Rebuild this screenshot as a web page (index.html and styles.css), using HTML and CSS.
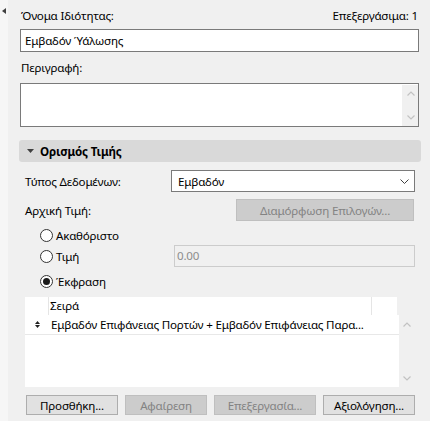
FILE: index.html
```html
<!DOCTYPE html>
<html lang="el">
<head>
<meta charset="utf-8">
<link rel="stylesheet" href="styles.css">
</head>
<body>
<div class="app">
  <div class="strip">
    <svg class="collapse" width="4" height="6" viewBox="0 0 4 6"><polygon points="4,0 4,6 0,3" fill="#404040"/></svg>
  </div>
  <div class="main">
    <div class="head">
      <span>Όνομα Ιδιότητας:</span>
      <span class="count">Επεξεργάσιμα: 1</span>
    </div>
    <div class="field">Εμβαδόν Ύάλωσης</div>
    <div class="label2">Περιγραφή:</div>
    <div class="textarea">
      <div class="vscroll">
        <svg width="8" height="5" viewBox="0 0 8 5"><polyline points="0.5,4.5 4,1 7.5,4.5" fill="none" stroke="#c2c2c2" stroke-width="1.2"/></svg>
        <svg width="8" height="5" viewBox="0 0 8 5"><polyline points="0.5,0.5 4,4 7.5,0.5" fill="none" stroke="#c2c2c2" stroke-width="1.2"/></svg>
      </div>
    </div>

    <div class="section">
      <svg class="tri" width="7" height="4" viewBox="0 0 7 4"><polygon points="0,0 7,0 3.5,4" fill="#404040"/></svg>
      <span>Ορισμός Τιμής</span>
    </div>

    <div class="body">
      <div class="frow first">
        <div class="lbl">Τύπος Δεδομένων:</div>
        <div class="select">
          <span>Εμβαδόν</span>
          <svg width="9" height="5" viewBox="0 0 9 5"><polyline points="0.5,0.5 4.5,4.5 8.5,0.5" fill="none" stroke="#404040" stroke-width="1"/></svg>
        </div>
      </div>
      <div class="frow second">
        <div class="lbl">Αρχική Τιμή:</div>
        <div class="btn disabled wide">Διαμόρφωση Επιλογών...</div>
      </div>

      <div class="radio r1">
        <span class="circle"></span><span>Ακαθόριστο</span>
      </div>
      <div class="radio r2">
        <div class="rlbl"><span class="circle"></span><span>Τιμή</span></div>
        <div class="dinput">0.00</div>
      </div>
      <div class="radio r3">
        <span class="circle checked"></span><span>Έκφραση</span>
      </div>

      <div class="list">
        <div class="lhead">
          <div class="c1"></div>
          <div class="c2">Σειρά</div>
          <div class="c3"></div>
        </div>
        <div class="lbody">
          <div class="rows">
            <div class="lrow">
              <div class="c1">
                <svg width="5" height="7" viewBox="0 0 5 7"><polygon points="0,3 5,3 2.5,0" fill="#202020"/><polygon points="0,4 5,4 2.5,7" fill="#202020"/></svg>
              </div>
              <div class="txt">Εμβαδόν Επιφάνειας Πορτών + Εμβαδόν Επιφάνειας Παρα...</div>
            </div>
          </div>
          <div class="lscroll">
            <svg width="8" height="5" viewBox="0 0 8 5"><polyline points="0.5,4.5 4,1 7.5,4.5" fill="none" stroke="#c2c2c2" stroke-width="1.2"/></svg>
            <svg width="8" height="5" viewBox="0 0 8 5"><polyline points="0.5,0.5 4,4 7.5,0.5" fill="none" stroke="#c2c2c2" stroke-width="1.2"/></svg>
          </div>
        </div>
      </div>

      <div class="buttons">
        <div class="btn b1">Προσθήκη...</div>
        <div class="btn disabled b2">Αφαίρεση</div>
        <div class="btn disabled b3">Επεξεργασία...</div>
        <div class="btn b4">Αξιολόγηση...</div>
      </div>
    </div>
  </div>
</div>
</body>
</html>
```

FILE: styles.css
```css
* { box-sizing: border-box; }

html, body {
  margin: 0;
  background: #f0f0f0;
}

body {
  width: 430px;
  height: 421px;
  overflow: hidden;
  font-family: "Noto Sans", "Open Sans", sans-serif;
  font-size: 11.6px;
  letter-spacing: -0.2px;
  color: #000;
}

.app {
  display: flex;
  height: 421px;
}

.strip {
  width: 8px;
  background: #f6f6f6;
  padding-top: 8px;
  padding-left: 2px;
}

.collapse { display: block; }

.main {
  flex: 1;
  padding: 8px 11px 0 12px;
}

.head {
  display: flex;
  justify-content: space-between;
  height: 16px;
  line-height: 16px;
  padding-left: 1px;
}

.count { padding-right: 1px; }

.field {
  margin-top: 5px;
  height: 23px;
  border: 1px solid #7a7a7a;
  background: #fff;
  padding-left: 4px;
  line-height: 21px;
  white-space: nowrap;
}

.label2 {
  margin-top: 8px;
  height: 16px;
  line-height: 16px;
  padding-left: 1px;
}

.textarea {
  margin-top: 7px;
  height: 44px;
  border: 1px solid #7a7a7a;
  background: #fff;
  display: flex;
  justify-content: flex-end;
  padding: 1px 0 0 0;
}

.vscroll, .lscroll {
  width: 16px;
  background: #f0f0f0;
  display: flex;
  flex-direction: column;
  justify-content: space-between;
  align-items: center;
}

.vscroll { padding: 6px 0 6px 1px; }

.vscroll svg, .lscroll svg { display: block; }

.section {
  margin: 13px -2px 0 -1px;
  height: 22px;
  background: #d9d9d9;
  border-radius: 3px;
  display: flex;
  align-items: center;
  padding-left: 8px;
  font-weight: bold;
}

.section .tri { margin-right: 6px; }

.body {
  padding: 0 4px 0 5px;
}

.frow {
  display: flex;
  align-items: center;
  height: 22px;
}

.frow.first { margin-top: 8px; }
.frow.second { margin-top: 7px; }

.lbl { width: 146px; }

.select {
  flex: 1;
  height: 22px;
  border: 1px solid #7a7a7a;
  background: #fff;
  display: flex;
  align-items: center;
  justify-content: space-between;
  padding: 0 5px 0 6px;
}

.btn {
  height: 22px;
  border: 1px solid #adadad;
  background: #e1e1e1;
  display: flex;
  align-items: center;
  justify-content: center;
  white-space: nowrap;
}

.btn.disabled {
  border-color: #bfbfbf;
  background: #cccccc;
  color: #838383;
}

.btn.wide {
  margin-left: auto;
  margin-right: 1px;
  width: 178px;
}

.radio {
  display: flex;
  align-items: center;
  padding-left: 15px;
  gap: 3px;
}

.radio.r1 { margin-top: 5px; height: 18px; }
.radio.r2 { margin-top: 1px; height: 22px; padding-left: 0; }
.radio.r3 { margin-top: 5px; height: 18px; }

.rlbl {
  width: 146px;
  padding-left: 15px;
  display: flex;
  align-items: center;
  gap: 3px;
}

.circle {
  width: 13px;
  height: 13px;
  border: 1px solid #333;
  border-radius: 50%;
  background: #fff;
  display: flex;
  align-items: center;
  justify-content: center;
  flex: none;
}

.circle.checked::after {
  content: "";
  width: 7px;
  height: 7px;
  border-radius: 50%;
  background: #1a1a1a;
}

.dinput {
  flex: 1;
  height: 22px;
  border: 1px solid #cccccc;
  background: #f0f0f0;
  color: #8d8d8d;
  padding-left: 2px;
  line-height: 20px;
}

.list {
  margin-top: 7px;
}

.lhead {
  display: flex;
  width: 372px;
  height: 18px;
  background: #fff;
  line-height: 18px;
}

.lhead .c1 {
  width: 24px;
  border-right: 1px solid #e5e5e5;
}

.lhead .c2 {
  width: 323px;
  border-right: 1px solid #e5e5e5;
  padding-left: 1px;
}

.lhead .c3 { flex: 1; }

.lbody {
  display: flex;
  height: 72px;
}

.rows {
  width: 374px;
  background: #fff;
}

.lrow {
  display: flex;
  align-items: center;
  height: 20px;
  border-bottom: 1px solid #e8e8e8;
  white-space: nowrap;
}

.lrow .c1 {
  width: 26px;
  padding-left: 10px;
  display: flex;
  align-items: center;
}

.lrow .c1 svg { display: block; }

.lscroll { padding: 7px 0 6px 0; }

.buttons {
  display: flex;
  gap: 7px;
  margin-top: 8px;
  padding-left: 1px;
}

.buttons .btn { height: 20px; }
.b1 { width: 92px; }
.b2 { width: 82px; }
.b3 { width: 102px; }
.b4 { width: 92px; }
```
